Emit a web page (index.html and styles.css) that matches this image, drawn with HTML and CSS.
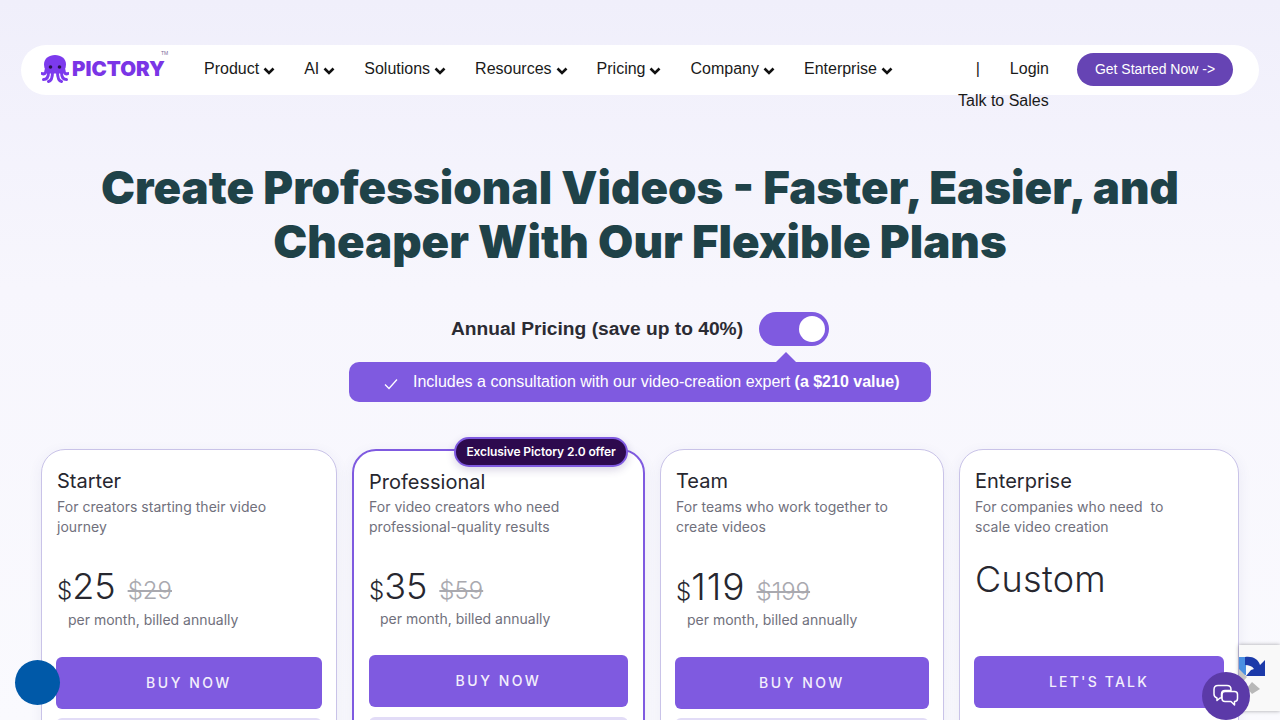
FILE: index.html
```html
<!DOCTYPE html>
<html lang="en">
<head>
<meta charset="utf-8">
<title>Pictory Pricing</title>
<link rel="stylesheet" href="styles.css">
</head>
<body>
<header class="nav">
  <a class="logo">
    <svg class="logo-mark" width="28" height="28" viewBox="0 0 28 28">
      <path d="M3 9.500 C3 3.500 8 0 14 0 C20 0 25 3.500 25 9.500 C25 14 23 17 20 18.500 L8 18.500 C5 17 3 14 3 9.500 Z" fill="#7c3aed"/>
      <path d="M5 15 C5 18.500 3 19.500 1 18.500 M7.500 17 C7.500 22 5.500 24.500 2.500 24.500 M11.500 17 C11.500 22.500 10 26 7.500 26.500 M16.500 17 C16.500 22.500 18 26 20.500 26.500 M20.500 17 C20.500 22 22.500 24.500 25.500 24.500 M23 15 C23 18.500 25 19.500 27 18.500" fill="none" stroke="#7c3aed" stroke-width="3" stroke-linecap="round"/>
      <circle cx="9.500" cy="12" r="1.800" fill="#2a1450"/>
      <circle cx="18.500" cy="12" r="1.800" fill="#2a1450"/>
    </svg>
    <span class="logo-text">PICTORY</span><span class="logo-tm">TM</span>
  </a>
  <nav class="menu">
    <a class="menu-item">Product<svg class="chev" viewBox="0 0 12 8"><path d="M1.500 1.500 6 6 10.500 1.500"/></svg></a>
    <a class="menu-item">AI<svg class="chev" viewBox="0 0 12 8"><path d="M1.500 1.500 6 6 10.500 1.500"/></svg></a>
    <a class="menu-item">Solutions<svg class="chev" viewBox="0 0 12 8"><path d="M1.500 1.500 6 6 10.500 1.500"/></svg></a>
    <a class="menu-item">Resources<svg class="chev" viewBox="0 0 12 8"><path d="M1.500 1.500 6 6 10.500 1.500"/></svg></a>
    <a class="menu-item">Pricing<svg class="chev" viewBox="0 0 12 8"><path d="M1.500 1.500 6 6 10.500 1.500"/></svg></a>
    <a class="menu-item">Company<svg class="chev" viewBox="0 0 12 8"><path d="M1.500 1.500 6 6 10.500 1.500"/></svg></a>
    <a class="menu-item">Enterprise<svg class="chev" viewBox="0 0 12 8"><path d="M1.500 1.500 6 6 10.500 1.500"/></svg></a>
  </nav>
  <div class="nav-right">
    <span class="sep">|</span>
    <a class="login">Login</a>
    <a class="cta">Get Started Now -&gt;</a>
    <a class="talk">Talk to Sales</a>
  </div>
</header>

<main>
  <h1 class="headline">Create Professional Videos - Faster, Easier, and<br>Cheaper With Our Flexible Plans</h1>

  <div class="toggle-row">
    <span class="toggle-label">Annual Pricing (save up to 40%)</span>
    <span class="toggle"><span class="knob"></span></span>
  </div>

  <div class="promo">
    <svg class="check" width="14" height="12" viewBox="0 0 14 12"><path d="M1 6.500 5 10.500 13 1.500"/></svg>
    <span>Includes a consultation with our video-creation expert <b>(a $210 value)</b></span>
  </div>

  <section class="plans">
    <article class="plan plan-starter">
      <h2>Starter</h2>
      <p class="desc">For creators starting their video journey</p>
      <div class="price"><span class="cur">$</span><span class="amt">25</span><s>$29</s></div>
      <p class="per">per month, billed annually</p>
      <a class="buy">BUY NOW</a>
      <div class="ghost"></div>
    </article>
    <article class="plan plan-pro">
      <span class="offer">Exclusive Pictory 2.0 offer</span>
      <h2>Professional</h2>
      <p class="desc">For video creators who need professional-quality results</p>
      <div class="price"><span class="cur">$</span><span class="amt">35</span><s>$59</s></div>
      <p class="per">per month, billed annually</p>
      <a class="buy">BUY NOW</a>
      <div class="ghost"></div>
    </article>
    <article class="plan plan-team">
      <h2>Team</h2>
      <p class="desc">For teams who work together to create videos</p>
      <div class="price"><span class="cur">$</span><span class="amt">119</span><s>$199</s></div>
      <p class="per">per month, billed annually</p>
      <a class="buy">BUY NOW</a>
      <div class="ghost"></div>
    </article>
    <article class="plan plan-ent">
      <h2>Enterprise</h2>
      <p class="desc">For companies who need&nbsp; to scale video creation</p>
      <div class="custom">Custom</div>
      <a class="buy">LET'S TALK</a>
    </article>
  </section>
</main>

<div class="recaptcha">
  <svg width="41" height="64" viewBox="0 0 41 64">
    <path d="M0 12 H7 V30 H0 Z" fill="#4a90e2"/>
    <path d="M6 12 C14 11 19 14 21 20 L26 15 V31 H7 L12 25 L15 24 C13 21 10 20 6 20 Z" fill="#1c3aa9"/>
    <path d="M0 24 L8 32 L3 38 L0 35 Z" fill="#c4c4c4"/>
    <path d="M13 37 L21 44 L13 49 L8 43 Z" fill="#b8b8b8"/>
  </svg>
</div>
<div class="blue-dot"></div>
<div class="chat">
  <svg width="26" height="24" viewBox="0 0 26 24" fill="none" stroke="#fff" stroke-width="1.500" stroke-linejoin="round">
    <path d="M5 1.500 H14 C16.500 1.500 18 3 18 5.500 V6.500 H12 C10 6.500 8.500 8 8.500 10 V14 H7 L4 16.500 V14 C2 13.500 1 12 1 10 V5.500 C1 3 2.500 1.500 5 1.500 Z"/>
    <path d="M12 7.500 H21.500 C23.500 7.500 24.500 8.500 24.500 10.500 V14.500 C24.500 16.500 23.500 17.500 21.500 17.500 V21 L18 17.500 H12 C10 17.500 9 16.500 9 14.500 V10.500 C9 8.500 10 7.500 12 7.500 Z"/>
  </svg>
</div>
</body>
</html>
```
FILE: styles.css
```css
* { box-sizing: border-box; }
html, body { margin: 0; height: 720px; overflow: hidden; }
body {
  background: linear-gradient(180deg, #f0effb 0%, #f7f6fd 40%, #fafafe 100%);
  font-family: "Liberation Sans", Arial, sans-serif;
  padding-top: 45px;
  position: relative;
}
h1, h2, p { margin: 0; }

.nav {
  margin: 0 21px;
  height: 50px;
  background: #fff;
  border-radius: 25px;
  display: flex;
  align-items: center;
  padding-left: 20px;
  position: relative;
  color: #1a1a1a;
  font-size: 16px;
}
.logo { display: flex; align-items: center; width: 163px; position: relative; height: 30px; margin-bottom: 2px; }
.logo-mark { flex: none; margin-right: 3px; }
.logo-text {
  font-family: Inter, sans-serif;
  font-weight: 900;
  font-size: 20.500px;
  line-height: 1;
  color: #7a35e6;
}
.logo-tm { position: absolute; left: 120px; top: -3px; font-size: 5px; line-height: 5px; color: #7a6a9a; }
.menu { display: flex; gap: 29px; margin-bottom: 2px; }
.menu-item { display: flex; align-items: center; gap: 4px; }
.chev { width: 12px; height: 8px; margin-top: 3px; }
.chev path { fill: none; stroke: #111; stroke-width: 2.600; }
.nav-right { margin-left: auto; display: flex; align-items: center; padding-right: 26px; margin-bottom: 2px; }
.sep { margin-right: 30px; }
.login { margin-right: 28px; }
.cta {
  width: 156px; height: 33px;
  background: #6644b4;
  border-radius: 17px;
  color: #fff;
  font-size: 14px;
  display: flex; align-items: center; justify-content: center;
}
.talk { position: absolute; left: 937px; top: 47px; white-space: nowrap; }

.headline {
  margin-top: 66px;
  text-align: center;
  font-family: Inter, sans-serif;
  font-weight: 900;
  font-size: 45.600px;
  line-height: 54px;
  color: #1f4248;
}

.toggle-row { margin-top: 43px; display: flex; justify-content: center; align-items: center; gap: 16px; height: 34px; }
.toggle-label { font-weight: 700; font-size: 19.200px; color: #2b2b33; }
.toggle { width: 70px; height: 34px; border-radius: 17px; background: #7f5ae0; display: flex; align-items: center; justify-content: flex-end; padding-right: 4px; }
.knob { width: 26px; height: 26px; border-radius: 50%; background: #fff; }

.promo {
  margin: 16px auto 0;
  width: 582px; height: 40px;
  background: #7f5ae0;
  border-radius: 10px;
  color: #fff;
  display: flex; align-items: center;
  padding-left: 35px;
  font-size: 16px;
  position: relative;
}
.promo::before {
  content: ""; position: absolute; left: 427px; top: -10px;
  border: 10px solid transparent; border-top: 0; border-bottom-color: #7f5ae0;
}
.check { margin-right: 15px; margin-top: 3px; }
.check path { fill: none; stroke: #fff; stroke-width: 1.300; }

.plans {
  margin: 47px 41px 0;
  display: grid;
  grid-template-columns: 296px 293px 284px 280px;
  gap: 15px;
  align-items: start;
  font-family: Inter, sans-serif;
}
.plan {
  position: relative;
  height: 330px;
  background: #fff;
  border: 1px solid #c9c3e8;
  border-radius: 24px;
  padding: 17px 14px 0 14px;
  box-shadow: 0 4px 14px rgba(70, 60, 140, .08);
}
.plan-pro { border: 2px solid #7f5ae0; padding: 17px 15px 0; }
.plan h2 { font-weight: 400; font-size: 20px; line-height: 28px; color: #27272f; padding-left: 1px; }
.desc { font-size: 14px; line-height: 20px; letter-spacing: .03px; color: #70707c; height: 40px; padding: 0 40px 0 1px; margin-top: 2px; }
.plan-pro h2 { padding-left: 0; }
.plan-pro .desc { margin-top: 1px; padding-left: 0; }
.plan-ent .desc { padding-right: 50px; }
.price { display: flex; align-items: baseline; margin-top: 27px; height: 38px; color: #27272f; padding-left: 1px; font-weight: 300; }
.plan-pro .price { margin-top: 27px; padding-left: 0; }
.cur { font-size: 24px; }
.amt { font-size: 36px; margin-right: 12px; }
.plan-team .amt { font-size: 37px; letter-spacing: 1px; margin-right: 11px; }
.price s { font-size: 24px; color: #a9a9af; }
.per { font-size: 14px; line-height: 20px; color: #70707c; margin-top: 8px; padding-left: 12px; }
.plan-pro .per { margin-top: 7px; padding-left: 11px; }
.buy {
  display: flex; align-items: center; justify-content: center;
  height: 52px;
  margin-top: 27px;
  padding-bottom: 2px;
  background: #7f5ae0;
  border-radius: 6px;
  color: #f3effc;
  font-size: 14px;
  font-weight: 500;
  letter-spacing: 2.500px;
}
.plan-pro .buy { margin-top: 26px; }
.ghost { height: 30px; margin-top: 9px; border-radius: 6px; background: #e2dcf7; }
.plan-pro .ghost { margin-top: 10px; }
.custom { font-size: 36px; font-weight: 300; line-height: 44px; color: #27272f; margin-top: 20px; padding-left: 1px; letter-spacing: .3px; }
.plan-ent .buy { margin-top: 55px; letter-spacing: 2.200px; }
.offer {
  position: absolute; left: 100px; top: -14px;
  width: 174px; height: 30px;
  padding-bottom: 2px;
  background: #2d0a4e;
  border: 2px solid #7f5ae0;
  border-radius: 15px;
  color: #fff;
  font-size: 12px; font-weight: 600;
  letter-spacing: -.1px;
  display: flex; align-items: center; justify-content: center;
  white-space: nowrap;
  box-shadow: 0 3px 8px rgba(60, 40, 120, .2);
}

.recaptcha {
  position: absolute; left: 1239px; top: 645px;
  width: 41px; height: 66px;
  background: #f9f9f9;
  box-shadow: 0 0 4px rgba(0, 0, 0, .35);
}
.recaptcha svg { display: block; }
.blue-dot { position: absolute; left: 15px; top: 660px; width: 45px; height: 45px; border-radius: 50%; background: #0059a8; }
.chat {
  position: absolute; left: 1202px; top: 672px;
  width: 48px; height: 48px; border-radius: 50%;
  background: #5b3aa8;
  display: flex; align-items: center; justify-content: center;
}
```
